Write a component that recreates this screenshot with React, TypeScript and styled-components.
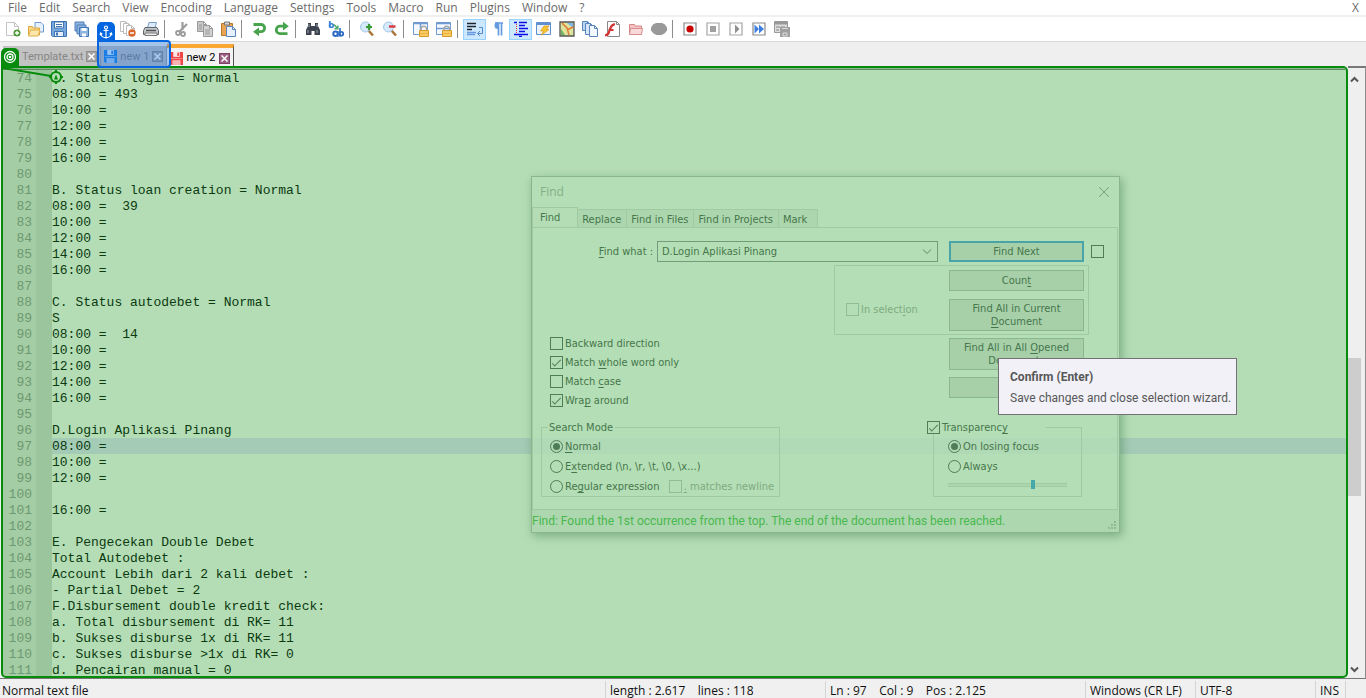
import React from "react";
import styled, { createGlobalStyle, css } from "styled-components";

const GlobalStyle = createGlobalStyle`
  *, *::before, *::after { box-sizing: border-box; }
  html, body { margin: 0; padding: 0; }
  body { overflow: hidden; background: #efefef; font: 12px/16px "Open Sans", sans-serif; color: #111; }
  button, input, select { font: inherit; color: inherit; margin: 0; }
`;

const green = "#068b0d";
const wash = "#b4ddb5";
const ink = "#46764c";
const line = "#9fcaa2";
const uiFont = '"DejaVu Sans Condensed", "DejaVu Sans", sans-serif';
const narrowFont = 'Roboto, "Open Sans", sans-serif';

/* ---------- window ---------- */
const Window = styled.div`
  height: 100vh;
  display: flex;
  flex-direction: column;
`;

const MenuBar = styled.nav`
  display: flex;
  justify-content: space-between;
  height: 15px;
  padding: 0 7px 0 2px;
  background: #fff;
`;
const MenuItems = styled.div`
  display: flex;
`;
const MenuButton = styled.button`
  border: 0;
  padding: 0 6px;
  height: 15px;
  line-height: 14px;
  background: none;
  color: #6a6a6a;
`;
const CloseDocument = styled(MenuButton)`
  padding: 0;
`;

const Toolbar = styled.div`
  display: flex;
  align-items: center;
  height: 27px;
  padding-left: 1px;
  background: #fff;
  border-top: 2px solid #f0f0f0;
  border-bottom: 1px solid #dadada;
`;
const ToolButton = styled.button<{ $pressed?: boolean }>`
  display: grid;
  place-items: center;
  flex: none;
  width: 23px;
  height: 21px;
  padding: 0;
  border: 1px solid ${(p) => (p.$pressed ? "#99d1ff" : "transparent")};
  background: ${(p) => (p.$pressed ? "#cce8ff" : "none")};
`;
const ToolSeparator = styled.span`
  flex: none;
  width: 1px;
  height: 18px;
  margin: 0 5px 0 2px;
  background: #8d8d8d;
`;

/* ---------- document tabs ---------- */
const TabStrip = styled.div`
  position: relative;
  z-index: 2;
  display: flex;
  align-items: flex-end;
  height: 24px;
  padding-left: 3px;
`;
const DocTab = styled.div<{ $active?: boolean }>`
  display: flex;
  align-items: center;
  gap: 3px;
  height: ${(p) => (p.$active ? 22 : 20)}px;
  padding: ${(p) => (p.$active ? "2px" : "1px")} 3px 0 3px;
  background: ${(p) => (p.$active ? "#f3f3f3" : "#c2c2c2")};
  color: ${(p) => (p.$active ? "#000" : "#858585")};
  border-top: ${(p) => (p.$active ? "4px solid #faa834" : "0")};
  border-right: 1px solid ${(p) => (p.$active ? "#555" : "#a5a5a5")};
`;
const TabLabel = styled.button`
  border: 0;
  padding: 0;
  background: none;
  font-family: ${narrowFont};
  font-size: 11px;
  line-height: 16px;
`;
const TabClose = styled.button<{ $active?: boolean }>`
  display: grid;
  place-items: center;
  width: 11px;
  height: 11px;
  padding: 0;
  border: 1px solid ${(p) => (p.$active ? "#7c4366" : "#8f8f8f")};
  background: ${(p) => (p.$active ? "#9a5f83" : "#a4a4a4")};
`;
const TargetBadge = styled.span`
  position: absolute;
  left: 1px;
  top: 6px;
  display: grid;
  place-items: center;
  width: 18px;
  height: 18px;
  border-radius: 5px 5px 0 0;
  background: ${green};
`;
const AnchorFrame = styled.div`
  position: absolute;
  left: 97px;
  top: -2px;
  width: 74px;
  height: 28px;
  border: 2px solid #0566e0;
  border-radius: 0 4px 4px 4px;
  background: rgba(5, 102, 224, 0.32);
`;
const AnchorBadge = styled.span`
  position: absolute;
  left: -2px;
  top: -20px;
  display: grid;
  place-items: center;
  width: 18px;
  height: 19px;
  border-radius: 5px 5px 0 0;
  background: #0566e0;
`;

/* ---------- editor ---------- */
const Workspace = styled.main`
  position: relative;
  flex: 1;
  min-height: 0;
  display: flex;
  padding-left: 1px;
`;
const Editor = styled.div`
  position: relative;
  flex: 1;
  min-width: 0;
  overflow: hidden;
  border: 2px solid ${green};
  border-radius: 0 5px 5px 5px;
  background: linear-gradient(to right, #a4cda5 0 33px, #9bc59d 33px 49px, ${wash} 49px);
`;
const TopShade = styled.div`
  height: 2px;
  border-bottom: 1px solid #5c8a5f;
  background: #8db58f;
`;
const CodeLine = styled.div`
  display: flex;
  height: 16px;
  font: 13px/18px "Liberation Mono", monospace;
  white-space: pre;
`;
const LineNumber = styled.span`
  flex: none;
  width: 49px;
  padding-right: 20px;
  text-align: right;
  color: #6d9970;
`;
const LineText = styled.span<{ $current?: boolean }>`
  flex: 1;
  color: #0b3a10;
  ${(p) => p.$current && css`background: #a4cbb5;`}
`;
const LinkMark = styled.svg`
  position: absolute;
  left: 0;
  top: 0;
`;
const ScrollBar = styled.div`
  display: flex;
  flex-direction: column;
  align-items: center;
  width: 18px;
  padding: 6px 4px 4px 0;
  border-top: 2px solid #777;
  border-right: 1px solid #8d8d8d;
  background: #efefef;
`;
const ScrollButton = styled.button`
  display: grid;
  place-items: center;
  width: 13px;
  height: 10px;
  padding: 0;
  border: 0;
  background: none;
`;
const ScrollTrack = styled.div`
  flex: 1;
  width: 13px;
  display: flex;
  flex-direction: column;
`;
const ScrollSpace = styled.span<{ $grow: number }>`
  flex: ${(p) => p.$grow} 0 0;
`;
const ScrollThumb = styled.span`
  flex: 138 0 0;
  background: #cdcdcd;
`;

/* ---------- status bar ---------- */
const StatusBar = styled.footer`
  display: flex;
  height: 20px;
  border-top: 1px solid #777;
  background: #f0f0f0;
  white-space: pre;
  overflow: hidden;
`;
const StatusCell = styled.div<{ $width?: number }>`
  flex: ${(p) => (p.$width ? `0 0 ${p.$width}px` : "1")};
  margin-top: 2px;
  padding: 2px 0 0 4px;
  line-height: 16px;
  border-left: 1px solid #d4d4d4;
  &:first-child { border-left: 0; padding-left: 2px; }
`;

/* ---------- find dialog ---------- */
const Dialog = styled.section`
  position: absolute;
  left: 531px;
  top: 110px;
  width: 589px;
  height: 357px;
  display: flex;
  flex-direction: column;
  border: 1px solid #8ab58e;
  background: rgba(180, 221, 181, 0.75);
  box-shadow: 2px 3px 9px rgba(40, 100, 50, 0.4);
  color: ${ink};
  font: 11px/13px ${uiFont};
`;
const DialogTitle = styled.header`
  display: flex;
  justify-content: space-between;
  align-items: center;
  height: 30px;
  padding: 0 9px 0 8px;
  color: #84b088;
  font: 12px/16px "Open Sans", sans-serif;
`;
const PlainButton = styled.button`
  display: grid;
  padding: 0;
  border: 0;
  background: none;
`;
const DialogTabs = styled.div`
  display: flex;
  align-items: flex-end;
  height: 20px;
`;
const DialogTab = styled.button<{ $active?: boolean }>`
  height: ${(p) => (p.$active ? 20 : 18)}px;
  padding: ${(p) => (p.$active ? "0 17px 0 7px" : "2px 5px 0 4px")};
  border: 1px solid ${line};
  border-bottom: 0;
  border-left-width: ${(p) => (p.$active ? 1 : 0)}px;
  background: ${(p) => (p.$active ? wash : "#acd6ae")};
  &:last-child { padding-right: 10px; }
`;
const DialogPage = styled.div`
  flex: 1;
  display: flex;
  flex-direction: column;
  margin-right: 1px;
  padding: 12px 15px 0 8px;
  border: 1px solid ${line};
`;
const FindRow = styled.div`
  display: flex;
  align-items: center;
  justify-content: flex-end;
  height: 23px;
  margin-right: -2px;
`;
const FindLabel = styled.label`
  margin-right: 4px;
`;
const FindSelect = styled.select`
  appearance: none;
  width: 281px;
  height: 21px;
  padding: 0 4px;
  border: 1px solid #739d78;
  border-radius: 0;
  background: transparent;
`;
const SelectArrow = styled.svg`
  margin: 0 15px 0 -18px;
  pointer-events: none;
`;
const Action = styled.button<{ $tall?: boolean; $primary?: boolean }>`
  flex: none;
  width: 135px;
  height: ${(p) => (p.$tall ? 32 : 21)}px;
  padding: 0 8px;
  line-height: 13px;
  border: ${(p) => (p.$primary ? "2px solid #48a4a6" : "1px solid #8bb78f")};
  background: #a7d0a9;
`;
const Middle = styled.div`
  display: flex;
  justify-content: space-between;
  height: 158px;
  padding-left: 9px;
`;
const Options = styled.div`
  display: flex;
  flex-direction: column;
  justify-content: flex-end;
  gap: 6px;
  padding-bottom: 14px;
`;
const Actions = styled.div`
  display: flex;
  flex-direction: column;
  align-items: flex-end;
  gap: 7px;
  padding: 2px 18px 0 0;
`;
const SelectionScope = styled.div`
  display: flex;
  align-items: center;
  justify-content: space-between;
  width: 255px;
  height: 70px;
  margin-right: -5px;
  padding: 0 4px 0 11px;
  border: 1px solid ${line};
`;
const ScopeActions = styled.div`
  display: flex;
  flex-direction: column;
  gap: 8px;
`;
const OpenedActions = styled.div`
  display: flex;
  flex-direction: column;
  gap: 7px;
  margin-top: -4px;
`;
const Choice = styled.label<{ $muted?: boolean }>`
  display: flex;
  align-items: center;
  gap: 2px;
  height: 13px;
  white-space: pre;
  color: ${(p) => (p.$muted ? "#7eab82" : "inherit")};
`;
const ScopeChoice = styled(Choice)`
  margin-top: 18px;
`;
const Check = styled.input<{ $muted?: boolean }>`
  appearance: none;
  display: grid;
  place-items: center;
  width: 13px;
  height: 13px;
  border: 1px solid ${(p) => (p.$muted ? "#91bd95" : "#4f7d55")};
  &[type="radio"] { border-radius: 50%; }
  &[type="checkbox"]:checked::after {
    content: "";
    width: 9px;
    height: 4px;
    border: solid #4f7d55;
    border-width: 0 0 1px 1px;
    transform: translateY(-1px) rotate(-45deg);
  }
  &[type="radio"]:checked::after {
    content: "";
    width: 7px;
    height: 7px;
    border-radius: 50%;
    background: #4f7d55;
  }
`;
const RowCheck = styled(Check)`
  margin-left: 7px;
`;
const Groups = styled.div`
  display: flex;
  justify-content: space-between;
  padding-right: 20px;
`;
const Group = styled.fieldset<{ $width: number }>`
  width: ${(p) => p.$width}px;
  height: 76px;
  margin: 0;
  padding: 6px 5px 0 8px;
  border: 1px solid ${line};
  min-width: 0;
`;
const Legend = styled.legend<{ $outset?: boolean }>`
  margin-left: ${(p) => (p.$outset ? -15 : -2)}px;
  padding: 0 ${(p) => (p.$outset ? 38 : 2)}px 0 ${(p) => (p.$outset ? 0 : 1)}px;
`;
const GroupBody = styled.div<{ $indent?: boolean }>`
  display: flex;
  flex-direction: column;
  gap: 7px;
  padding-left: ${(p) => (p.$indent ? 6 : 0)}px;
`;
const Pair = styled.div`
  display: flex;
  justify-content: space-between;
`;
const Slider = styled.input`
  appearance: none;
  width: 119px;
  height: 9px;
  background: linear-gradient(transparent 3px, ${line} 3px 4px, #acd6ae 4px 6px, ${line} 6px 7px, transparent 7px);
  &::-webkit-slider-thumb {
    appearance: none;
    width: 4px;
    height: 9px;
    background: #48a8a8;
  }
`;
const DialogStatus = styled.footer`
  display: flex;
  justify-content: space-between;
  align-items: flex-end;
  height: 22px;
  background: #add7af;
  color: #49b84e;
  font: 12px/22px ${narrowFont};
  white-space: nowrap;
`;
const Key = styled.u`
  text-underline-offset: 2px;
`;

const Tooltip = styled.aside`
  position: absolute;
  left: 998px;
  top: 292px;
  width: 239px;
  height: 57px;
  padding: 10px 11px;
  border: 1px solid #756f7a;
  background: #f1f1f7;
  color: #575757;
  font-family: ${narrowFont};
  white-space: nowrap;
`;
const TooltipTitle = styled.strong`
  display: block;
  margin-bottom: 5px;
`;
const TooltipText = styled.p`
  margin: 0;
`;

/* ---------- drawings ---------- */
const Svg = ({ children, s = 16 }: { children: React.ReactNode; s?: number }) => (
  <svg width={s} height={s} viewBox="0 0 16 16" fill="none" aria-hidden="true">{children}</svg>
);

const Page = ({ x, y, w = 9, h = 11, stroke = "#5a86bd", fill = "#fff" }: { x: number; y: number; w?: number; h?: number; stroke?: string; fill?: string }) => (
  <path d={`M${x + 0.5} ${y + 0.5}h${w - 4}l3 3v${h - 4}h-${w - 1}z M${x + w - 3.5} ${y + 0.5}v3h3`} fill={fill} stroke={stroke} />
);
const Floppy = ({ c = "#3f74b5", f = "#78a7dc" }) => (
  <>
    <path d="M.5.5h15v15H1.500l-1-1z" fill={f} stroke={c} />
    <path d="M3.500 1h9v6h-9z" fill="#fff" stroke={c} />
    <path d="M5 3.500h6M5 5.500h6" stroke={c} />
    <path d="M3.500 10.500h9v5h-9z" fill="#e6eef7" stroke={c} />
    <path d="M5 11.500h2v3h-2z" fill={c} />
  </>
);
const TabFloppy = ({ c = "#3f74b5" }) => (
  <>
    <path d="M0 0h16v16H2l-2-2z" fill={c} />
    <path d="M4 0h8v6H4z" fill="#fff" fillOpacity=".85" />
    <path d="M9 1h2v4H9z" fill={c} />
    <path d="M3 10h10v6H3z" fill="#fff" fillOpacity=".6" />
    <path d="M1 8h14" stroke="#fff" strokeOpacity=".5" />
  </>
);
const Lock = () => (
  <>
    <path d="M8 10V8a2.800 2.800 0 0 1 5.600 0v2" stroke="#a9a9a9" strokeWidth="1.600" />
    <path d="M6.500 9.500h9v6h-9z" fill="#f8cc63" stroke="#d99a2c" />
    <path d="M7 12.500h8" stroke="#eeb03f" />
  </>
);
const Box = ({ children, c = "#8a8a8a" }: { children: React.ReactNode; c?: string }) => (
  <><path d="M2 2h12v12H2z" fill="#fff" stroke={c} strokeWidth="1.200" />{children}</>
);

const icons: Record<string, React.ReactNode> = {
  New: <><path d="M1.500 1.500h8l4 4v9h-12z" fill="#fff" stroke="#c3c3c3" /><path d="M9.500 1.500v4h4" stroke="#c3c3c3" /><circle cx="12" cy="12" r="3.500" fill="#4c9a3c" /><path d="M12 10v4M10 12h4" stroke="#fff" strokeWidth="1.300" /></>,
  Open: <><path d="M7 1.500h6l2.500 2.500v7H7z" fill="#e7f1fd" stroke="#6f9bd2" /><path d="M.5 13.500v-8h4l1 1.500h6v7z" fill="#f7d88c" stroke="#dfa63c" /><path d="M.5 15l2-6h9.500l-2 6z" fill="#fce7ab" stroke="#e2ad46" /></>,
  Save: <Floppy />,
  "Save All": <><path d="M1 1h9v9H1z" fill="#8fb5df" stroke="#4c7ebb" /><path d="M3 4h9v9H3z" fill="#8fb5df" stroke="#4c7ebb" /><path d="M5.500 6.500h9v9h-9z" fill="#8fb5df" stroke="#3f74b5" /><path d="M7.500 7h5v3h-5zM8 12.500h4v3H8z" fill="#fff" /></>,
  Close: <><Page x={2} y={1} stroke="#aaa" /><Page x={5} y={4} stroke="#aaa" /></>,
  "Close All": <><Page x={0} y={0} stroke="#bcbcbc" /><Page x={3} y={2} stroke="#bcbcbc" /><Page x={6} y={4} stroke="#bcbcbc" /><circle cx="12" cy="12" r="3.700" fill="#d9682f" /><path d="M10 12h4" stroke="#fff" strokeWidth="1.500" /></>,
  Print: <><path d="M4.500 7L6 1.500h7.500L12 7" fill="#dcebfb" stroke="#7b9cc4" /><path d="M2 6.500h12l1.500 3v4h-15v-4z" fill="#c3c7cc" stroke="#60666e" /><path d="M2 12h12v2.500H2z" fill="#eee" stroke="#777" /><path d="M3 9.500h10" stroke="#555" strokeWidth="1.500" /></>,
  Cut: <><path d="M8.500 1v8M13 3L5 11" stroke="#9b9b9b" strokeWidth="2.200" /><circle cx="4" cy="12" r="2" stroke="#9b9b9b" strokeWidth="1.800" /><circle cx="9" cy="13" r="2" stroke="#9b9b9b" strokeWidth="1.800" /></>,
  Copy: <><Page x={0} y={0} w={10} h={11} stroke="#999" fill="#c9c9c9" /><Page x={6} y={4} w={10} h={12} stroke="#999" fill="#d2d2d2" /><path d="M8 9h5M8 11h5M8 13h5M2 4h3M2 6h3M2 8h3" stroke="#999" /></>,
  Paste: <><path d="M1.500 2.500h11v12h-11z" fill="#eaa552" stroke="#b97828" /><path d="M4.500 1h5v3h-5z" fill="#d5d5d5" stroke="#777" /><Page x={6} y={5} w={10} h={11} fill="#e5f0fc" /></>,
  Undo: <><path d="M2.500 3.500H10a3.600 3.600 0 0 1 0 7.200H7" stroke="#47a34c" strokeWidth="2.800" /><path d="M2 10.800L8 6.500v8.800z" fill="#47a34c" /></>,
  Redo: <><path d="M10 5.200H6a3.700 3.700 0 0 0 0 7.400h7.500" stroke="#47a34c" strokeWidth="2.800" /><path d="M14.800 5.200L9 .8v8.800z" fill="#47a34c" /></>,
  Find: <><path d="M3 2h3v3h4V2h3v3l2 4v5H9.500v-4h-3v4H1V9l2-4z" fill="#3d4450" /><path d="M4 3v3M12 3v3M3 9v3M12 9v3" stroke="#98a3b2" /></>,
  Replace: <><path d="M1.800 0v6.500" stroke="#3b83d6" strokeWidth="1.800" /><circle cx="3.400" cy="4.600" r="1.900" stroke="#3b83d6" strokeWidth="1.600" /><path d="M6 3.500l3.500 4M9.800 4.500v3.300H6.500" stroke="#57a86b" strokeWidth="1.500" /><circle cx="7.500" cy="12.700" r="2.200" stroke="#2d6bc4" strokeWidth="2" /><path d="M9.800 10v5.700M12 7v8.500" stroke="#2d6bc4" strokeWidth="1.600" /><circle cx="13.300" cy="12.700" r="1.900" stroke="#2d6bc4" strokeWidth="1.800" /></>,
  "Zoom In": <><path d="M9 9l5 5.500" stroke="#a8743b" strokeWidth="2.600" /><circle cx="6.500" cy="6" r="5" fill="#d4e9fb" stroke="#a3c6e8" /><path d="M10 3v6M7 6h6" stroke="#3a9a35" strokeWidth="2.200" /></>,
  "Zoom Out": <><path d="M9 9l5 5.500" stroke="#a8743b" strokeWidth="2.600" /><circle cx="6.500" cy="6" r="5" fill="#d4e9fb" stroke="#a3c6e8" /><path d="M7 5.500h6.500" stroke="#d8393b" strokeWidth="2.400" /></>,
  "Synchronize Vertical Scrolling": <><path d="M.5 1.500h14v12H.5z" fill="#f5f9ff" stroke="#6f9bd0" /><path d="M.5 2.500h14M7.500 2v12" stroke="#6f9bd0" strokeWidth="1.500" /><Lock /></>,
  "Synchronize Horizontal Scrolling": <><path d="M.5 1.500h14v12H.5z" fill="#f5f9ff" stroke="#6f9bd0" /><path d="M.5 2.500h14M.5 7.500h14" stroke="#6f9bd0" strokeWidth="1.500" /><Lock /></>,
  "Word Wrap": <><path d="M0 2.500h9M0 5.500h9M0 8.500h5" stroke="#20242c" strokeWidth="1.300" /><path d="M0 11.500h9M0 13.500h8" stroke="#6b9bdc" strokeWidth="1.500" /><path d="M12 6.500h3.500v6H11M13 10l-2.500 2.500L13 15" stroke="#5687cf" /></>,
  "Show All Characters": <><path d="M5 2h8M8.500 2v12.500M11.500 2v12.500" stroke="#659be0" strokeWidth="1.700" /><path d="M8 1a3.500 3.500 0 0 0 0 7z" fill="#659be0" /></>,
  "Show Indent Guide": <><path d="M1 1.500h3M6 1.500h8M6 4.500h6M6 7.500h9M6 10.500h6M1 13.500h14M6 15.500h3" stroke="#0d0de8" strokeWidth="1.600" /><path d="M3.500 3v9" stroke="#e33" strokeDasharray="1 1" /></>,
  "Define Language": <><path d="M.5 1.500h14v12H.5z" fill="#e9f2fd" stroke="#5f8fce" /><path d="M1 3h13" stroke="#5f8fce" strokeWidth="2" /><path d="M8 5h5l-2.500 3.500H13L5.500 14l2-4H4.500z" fill="#f7c52e" stroke="#e39a1c" strokeWidth=".7" /></>,
  "Document Map": <><path d="M1 1h14v14H1z" fill="#dfe49c" stroke="#555" strokeWidth="1.300" /><path d="M8 2h6v5z" fill="#7ab6ea" /><path d="M2 8l4 6H2z" fill="#70b062" /><path d="M3 2l5 5 2 7M14 6L8 9" stroke="#e07b36" strokeWidth="1.500" /></>,
  "Document List": <><Page x={0} y={0} w={9} h={10} fill="#bcd5f1" /><Page x={3} y={2} w={9} h={12} fill="#d7e7f9" /><Page x={7} y={4} w={9} h={12} fill="#f2f8ff" /></>,
  "Function List": <><path d="M2.500.500h9l3 3v12h-12z" fill="#fff" stroke="#8a8a8a" /><path d="M11.500.500v3h3" stroke="#8a8a8a" /><path d="M0 14c4 1 3.500-3 5-6s2-5 5-4.500M3.500 9h5" stroke="#d13434" strokeWidth="2.200" /></>,
  "Folder as Workspace": <><path d="M1.500 13.500v-10h5l1 1.500h6v8.500z" fill="#f4c2c2" stroke="#d78686" /><path d="M1.500 13.500l1-6h12l-1 6z" fill="#f9dada" stroke="#d98f8f" /></>,
  Monitoring: <path d="M5 2h6l3 1.500 2 3v3l-2.500 3-3 1.500H5.500l-3-1.500L0 9.500v-3l2-3z" fill="#999" />,
  Record: <Box><circle cx="8" cy="8" r="3.600" fill="#c80000" /></Box>,
  Stop: <Box c="#a5a5a5"><path d="M5 5h6v6H5z" fill="#a0a0a0" /></Box>,
  Play: <Box c="#a5a5a5"><path d="M7 3.500L11.500 8 7 12.500z" fill="#8f8f8f" /></Box>,
  "Play Multiple Times": <Box><path d="M3.500 3.500L8 8l-4.500 4.500zM8 3.500L13 8l-5 4.500z" fill="#3f7fe0" /></Box>,
  "Save Macro": <><path d="M.5.500h13v11H.5z" fill="#ddd" stroke="#999" /><path d="M1 2h12" stroke="#999" strokeWidth="3" /><path d="M2 6h4M7 6h4M2 9h3" stroke="#888" /><path d="M6 6h10v10H6z" fill="#a0a0a0" /><path d="M9 12h4v3H9zM8 7.500h6" stroke="#ddd" /></>,
};

const toolGroups: string[][] = [
  ["New", "Open", "Save", "Save All", "Close", "Close All", "Print"],
  ["Cut", "Copy", "Paste"],
  ["Undo", "Redo"],
  ["Find", "Replace"],
  ["Zoom In", "Zoom Out"],
  ["Synchronize Vertical Scrolling", "Synchronize Horizontal Scrolling"],
  ["Word Wrap", "Show All Characters", "Show Indent Guide", "Define Language", "Document Map", "Document List", "Function List", "Folder as Workspace", "Monitoring"],
  ["Record", "Stop", "Play", "Play Multiple Times", "Save Macro"],
];
const pressed = new Set(["Word Wrap", "Show Indent Guide"]);

const menus = ["File", "Edit", "Search", "View", "Encoding", "Language", "Settings", "Tools", "Macro", "Run", "Plugins", "Window", "?"];

const firstLine = 74;
const currentLine = 97;
const code = [
  "A. Status login = Normal", "08:00 = 493", "10:00 =", "12:00 =", "14:00 =", "16:00 =", "",
  "B. Status loan creation = Normal", "08:00 =  39", "10:00 =", "12:00 =", "14:00 =", "16:00 =", "",
  "C. Status autodebet = Normal", "S", "08:00 =  14", "10:00 =", "12:00 =", "14:00 =", "16:00 =", "",
  "D.Login Aplikasi Pinang", "08:00 =", "10:00 =", "12:00 =", "", "16:00 =", "",
  "E. Pengecekan Double Debet", "Total Autodebet :", "Account Lebih dari 2 kali debet :", "- Partial Debet = 2",
  "F.Disbursement double kredit check:", "a. Total disbursement di RK= 11", "b. Sukses disburse 1x di RK= 11",
  "c. Sukses disburse >1x di RK= 0", "d. Pencairan manual = 0",
];

const CloseGlyph = () => (
  <svg width="7" height="7" viewBox="0 0 7 7" aria-hidden="true"><path d="M.5.500l6 6M6.500.500l-6 6" stroke="#fff" strokeWidth="1.500" /></svg>
);

const Tab = ({ name, active, color }: { name: string; active?: boolean; color: string }) => (
  <DocTab $active={active}>
    <Svg s={13}><TabFloppy c={color} /></Svg>
    <TabLabel>{name}</TabLabel>
    <TabClose $active={active} aria-label={`Close ${name}`}><CloseGlyph /></TabClose>
  </DocTab>
);

const FindDialog = () => (
  <Dialog role="dialog" aria-label="Find">
    <DialogTitle>
      <span>Find</span>
      <PlainButton aria-label="Close">
        <svg width="12" height="12" viewBox="0 0 12 12"><path d="M1 1l10 10M11 1L1 11" stroke="#78a57d" /></svg>
      </PlainButton>
    </DialogTitle>
    <DialogTabs>
      <DialogTab $active>Find</DialogTab>
      <DialogTab>Replace</DialogTab>
      <DialogTab>Find in Files</DialogTab>
      <DialogTab>Find in Projects</DialogTab>
      <DialogTab>Mark</DialogTab>
    </DialogTabs>
    <DialogPage>
      <FindRow>
        <FindLabel htmlFor="what"><Key>F</Key>ind what :</FindLabel>
        <FindSelect id="what"><option>D.Login Aplikasi Pinang</option></FindSelect>
        <SelectArrow width="14" height="8" viewBox="0 0 14 8"><path d="M3 1.500l4 4 4-4" fill="none" stroke="#5c8a61" /></SelectArrow>
        <Action $primary>Find Next</Action>
        <RowCheck type="checkbox" aria-label="Find both directions" />
      </FindRow>
      <Middle>
        <Options>
          <Choice><Check type="checkbox" />Backward direction</Choice>
          <Choice><Check type="checkbox" defaultChecked /><span>Match <Key>w</Key>hole word only</span></Choice>
          <Choice><Check type="checkbox" /><span>Match <Key>c</Key>ase</span></Choice>
          <Choice><Check type="checkbox" defaultChecked /><span>Wra<Key>p</Key> around</span></Choice>
        </Options>
        <Actions>
          <SelectionScope>
            <ScopeChoice $muted><Check $muted type="checkbox" disabled /><span>In select<Key>i</Key>on</span></ScopeChoice>
            <ScopeActions>
              <Action>Coun<Key>t</Key></Action>
              <Action $tall>Find All in Current<br /><Key>D</Key>ocument</Action>
            </ScopeActions>
          </SelectionScope>
          <OpenedActions>
            <Action $tall>Find All in All <Key>O</Key>pened<br />Documents</Action>
            <Action aria-label="Close" />
          </OpenedActions>
        </Actions>
      </Middle>
      <Groups>
        <Group $width={239}>
          <Legend>Search Mode</Legend>
          <GroupBody>
            <Choice><Check type="radio" name="mode" defaultChecked /><span><Key>N</Key>ormal</span></Choice>
            <Choice><Check type="radio" name="mode" /><span>E<Key>x</Key>tended (\n, \r, \t, \0, \x...)</span></Choice>
            <Pair>
              <Choice><Check type="radio" name="mode" /><span>Re<Key>g</Key>ular expression</span></Choice>
              <Choice $muted><Check $muted type="checkbox" disabled /><span><Key>.</Key> matches newline</span></Choice>
            </Pair>
          </GroupBody>
        </Group>
        <Group $width={149}>
          <Legend $outset><Choice><Check type="checkbox" defaultChecked /><span>Transparenc<Key>y</Key></span></Choice></Legend>
          <GroupBody $indent>
            <Choice><Check type="radio" name="alpha" defaultChecked />On losing focus</Choice>
            <Choice><Check type="radio" name="alpha" />Always</Choice>
            <Slider type="range" defaultValue={72} aria-label="Transparency level" />
          </GroupBody>
        </Group>
      </Groups>
    </DialogPage>
    <DialogStatus>
      <span>Find: Found the 1st occurrence from the top. The end of the document has been reached.</span>
      <svg width="12" height="12" viewBox="0 0 12 12" aria-hidden="true"><path d="M7 1h2v2H7zM4 4h2v2H4zM7 4h2v2H7zM1 7h2v2H1zM4 7h2v2H4zM7 7h2v2H7z" fill="#8ebb92" /></svg>
    </DialogStatus>
  </Dialog>
);

export default function App() {
  return (
    <>
      <GlobalStyle />
      <Window>
        <MenuBar>
          <MenuItems>{menus.map((m) => <MenuButton key={m}>{m}</MenuButton>)}</MenuItems>
          <CloseDocument aria-label="Close document">X</CloseDocument>
        </MenuBar>
        <Toolbar role="toolbar">
          {toolGroups.map((group, i) => (
            <React.Fragment key={i}>
              {i > 0 && <ToolSeparator />}
              {group.map((name) => (
                <ToolButton key={name} title={name} $pressed={pressed.has(name)}><Svg>{icons[name]}</Svg></ToolButton>
              ))}
            </React.Fragment>
          ))}
        </Toolbar>
        <TabStrip>
          <Tab name="Template.txt" color="#9a9a9a" />
          <Tab name="new 1" color="#2488e6" />
          <Tab name="new 2" active color="#ee4444" />
          <TargetBadge>
            <svg width="14" height="14" viewBox="0 0 14 14" fill="none" stroke="#fff" strokeWidth="1.300"><circle cx="7" cy="7" r="5.500" /><circle cx="7" cy="7" r="3" /><circle cx="7" cy="7" r=".7" fill="#fff" /></svg>
          </TargetBadge>
          <AnchorFrame>
            <AnchorBadge>
              <svg width="14" height="14" viewBox="0 0 14 14" fill="none" stroke="#fff" strokeWidth="1.200"><circle cx="7" cy="2.500" r="1.500" /><path d="M7 4v9M4.500 5.500h5M1.500 8.500C2 11.500 4 12.500 7 12.800 10 12.500 12 11.500 12.500 8.500M1 10l.7-2 1.600 1.200M13 10l-.7-2-1.600 1.200" /></svg>
            </AnchorBadge>
          </AnchorFrame>
        </TabStrip>
        <Workspace>
          <Editor>
            <TopShade />
            {code.map((text, i) => {
              const n = firstLine + i;
              return (
                <CodeLine key={n}>
                  <LineNumber>{n}</LineNumber>
                  <LineText $current={n === currentLine}>{text}</LineText>
                </CodeLine>
              );
            })}
            <LinkMark width="62" height="18" viewBox="0 0 62 18" fill="none" stroke={green}>
              <path d="M0 0l48 8" strokeWidth="2" />
              <circle cx="53" cy="9" r="5" strokeWidth="2" fill={wash} />
              <path d="M53 2v3M53 13v3M46 9h3M57 9h3" strokeWidth="2" />
              <path d="M53 6.500l2 5h-4z" fill={green} stroke="none" />
            </LinkMark>
          </Editor>
          <ScrollBar>
            <ScrollButton aria-label="Scroll up"><svg width="9" height="7" viewBox="0 0 9 7"><path d="M1 5.500L4.500 2 8 5.500" fill="none" stroke="#555" strokeWidth="2" /></svg></ScrollButton>
            <ScrollTrack>
              <ScrollSpace $grow={273} />
              <ScrollThumb />
              <ScrollSpace $grow={167} />
            </ScrollTrack>
            <ScrollButton aria-label="Scroll down"><svg width="9" height="7" viewBox="0 0 9 7"><path d="M1 1.500L4.500 5 8 1.500" fill="none" stroke="#555" strokeWidth="2" /></svg></ScrollButton>
          </ScrollBar>
          <FindDialog />
          <Tooltip role="tooltip">
            <TooltipTitle>Confirm (Enter)</TooltipTitle>
            <TooltipText>Save changes and close selection wizard.</TooltipText>
          </Tooltip>
        </Workspace>
        <StatusBar>
          <StatusCell>Normal text file</StatusCell>
          <StatusCell $width={220}>length : 2.617    lines : 118</StatusCell>
          <StatusCell $width={260}>Ln : 97    Col : 9    Pos : 2.125</StatusCell>
          <StatusCell $width={110}>Windows (CR LF)</StatusCell>
          <StatusCell $width={120}>UTF-8</StatusCell>
          <StatusCell $width={30}>INS</StatusCell>
          <StatusCell $width={21} />
        </StatusBar>
      </Window>
    </>
  );
}
